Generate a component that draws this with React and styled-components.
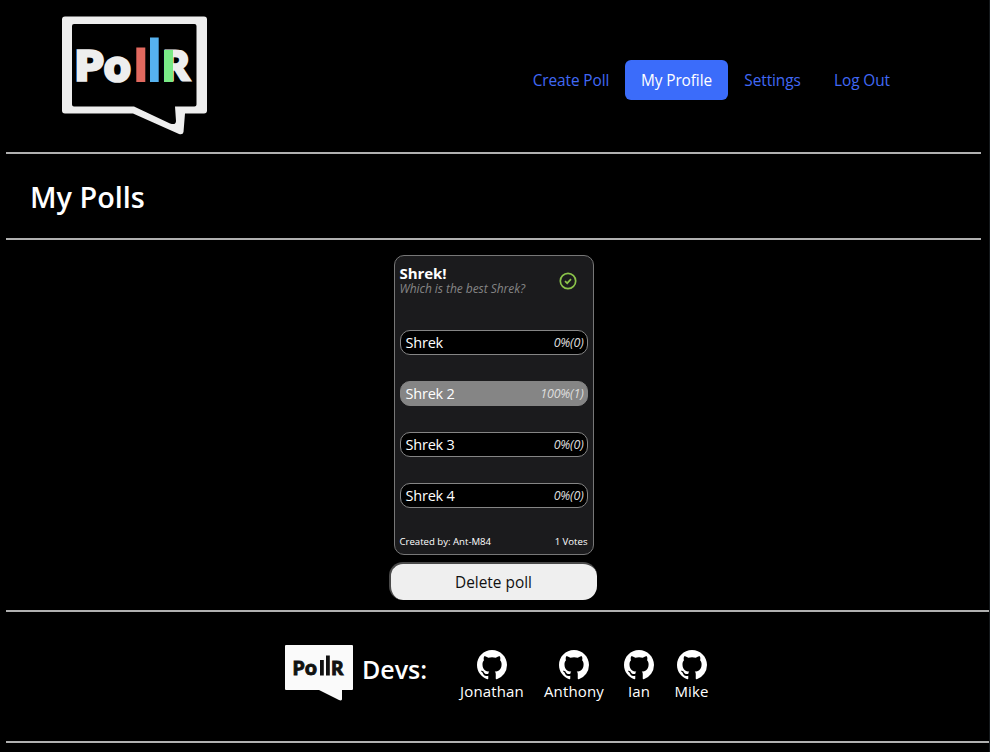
import React from "react";
import styled, { createGlobalStyle } from "styled-components";

const Global = createGlobalStyle`
  * { box-sizing: border-box; }
  html, body { margin: 0; background: #000; overflow: hidden; }
  body { font-family: "Open Sans", "Noto Sans", sans-serif; color: #fff; font-size: 16px; }
`;

const Page = styled.div`
  width: 990px;
  height: 752px;
  overflow: hidden;
  padding-left: 6px;
  background: #000;
  border-right: 1px solid #15191c;
`;
const Label = styled.span`
  display: block;
  margin: 0;
  white-space: nowrap;
  font-size: ${(p) => p.$size || 15.4}px;
  font-weight: ${(p) => p.$weight || 400};
  font-style: ${(p) => (p.$italic ? "italic" : "normal")};
  letter-spacing: ${(p) => p.$spacing || 0}px;
  color: ${(p) => p.$color || "inherit"};
  line-height: 1;
`;
const Header = styled.header`
  width: 975px;
  height: 154px;
  display: flex;
  justify-content: space-between;
  padding: 16px 74px 0 55px;
  border-bottom: 2px solid #b0b0b0;
`;
const Nav = styled.nav`
  display: flex;
  height: 40px;
  margin-top: 44px;
`;
const NavLink = styled.a`
  display: flex;
  align-items: center;
  justify-content: center;
  width: ${(p) => p.$width}px;
  padding-top: 2px;
  border-radius: 6px;
  color: ${(p) => (p.$active ? "#fff" : "#4169f5")};
  background: ${(p) => (p.$active ? "#3b6cfa" : "transparent")};
`;
const TitleBar = styled.section`
  width: 975px;
  height: 86px;
  display: flex;
  align-items: center;
  padding: 3px 0 0 24px;
  border-bottom: 2px solid #b0b0b0;
`;
const Content = styled.main`
  height: 370px;
  width: 975px;
  display: flex;
  flex-direction: column;
  align-items: center;
  padding-top: 15px;
`;
const Card = styled.article`
  width: 200px;
  height: 300px;
  border: 1px solid #777;
  border-radius: 10px;
  background: #1b1b1d;
  padding: 0 5px;
`;
const CardHead = styled.div`
  display: flex;
  justify-content: space-between;
  height: 74px;
  padding: 10px 11px 0 0;
`;
const Titles = styled.div`
  display: flex;
  flex-direction: column;
  gap: 2px;
`;
const StatusIcon = styled.svg`
  margin-top: 6px;
`;
const Options = styled.div`
  display: flex;
  flex-direction: column;
  gap: 26px;
`;
const Option = styled.div`
  height: 25px;
  display: flex;
  align-items: center;
  justify-content: space-between;
  padding: 2px 3px 0 5px;
  border: 1px solid #858585;
  border-radius: 10px;
  background: ${(p) => (p.$leading ? "#858585" : "#000")};
`;
const CardFoot = styled.div`
  display: flex;
  justify-content: space-between;
  margin-top: 29px;
`;
const DeleteButton = styled.button`
  width: 208px;
  height: 38px;
  margin: 7px 2px 0 0;
  padding: 2px 0 0;
  display: flex;
  align-items: center;
  justify-content: center;
  border: 0;
  border-top: 2px solid #4a4a4a;
  border-left: 2px solid #4a4a4a;
  border-radius: 14px;
  background: #efefef;
  color: #111;
  font-family: inherit;
`;
const Footer = styled.footer`
  height: 133px;
  border-top: 2px solid #b0b0b0;
  border-bottom: 2px solid #b0b0b0;
  display: flex;
  padding: 33px 0 0 279px;
`;
const DevsTitle = styled.div`
  width: 107px;
  padding: 12px 0 0 9px;
`;
const Devs = styled.div`
  display: flex;
  gap: 20px;
  margin-top: 5px;
`;
const Dev = styled.a`
  display: flex;
  flex-direction: column;
  align-items: center;
  width: ${(p) => p.$width}px;
  gap: 4px;
`;
const Letter = styled.text`
  font-family: Lato, sans-serif;
  font-weight: 900;
  font-size: ${(p) => p.$size}px;
  stroke: currentColor;
  stroke-width: ${(p) => p.$stroke}px;
`;
const LogoSvg = styled.svg`
  color: ${(p) => p.$color};
  fill: currentColor;
`;

function Logo() {
  return (
    <LogoSvg $color="#eee" width="147" height="120" viewBox="61 16 147 120">
      <path
        fillRule="evenodd"
        d="M65 16.5H204a3 3 0 0 1 3 3V110.500a3 3 0 0 1-3 3H185L183.500 132Q183 135 179 134L133 113.500H65a3 3 0 0 1-3-3V19.500a3 3 0 0 1 3-3ZM74 24a2 2 0 0 0-2 2V104.500a2 2 0 0 0 2 2H134L170 123.500Q176 125.500 176 121L175 106.500H194.500a2 2 0 0 0 2-2V26a2 2 0 0 0-2-2Z"
      />
      <Letter x="75.300" y="80.300" $size={40} $stroke={3.6} textLength="27.500" lengthAdjust="spacingAndGlyphs">P</Letter>
      <Letter x="104.500" y="81" $size={44.5} $stroke={3.6}>o</Letter>
      <rect x="136.300" y="47.500" width="9" height="34.500" fill="#e2695f" />
      <rect x="150" y="37.500" width="8.700" height="44.500" fill="#56b2ef" />
      <Letter x="163" y="80.300" $size={40} $stroke={3.2}>R</Letter>
      <rect x="164" y="50" width="9" height="32" fill="#7aea86" />
    </LogoSvg>
  );
}

function SmallLogo() {
  return (
    <LogoSvg $color="#111" width="68" height="56" viewBox="285 645 68 56">
      <path fill="#fafafa" d="M286 645H352a1 1 0 0 1 1 1V689a1 1 0 0 1-1 1H342V699.500Q341 701 339 700L319 690H286a1 1 0 0 1-1-1V646a1 1 0 0 1 1-1Z" />
      <Letter x="292.800" y="674.800" $size={18.5} $stroke={1}>P</Letter>
      <Letter x="305" y="675" $size={20.5} $stroke={1}>o</Letter>
      <rect x="320" y="660" width="3.800" height="15.500" />
      <rect x="326" y="655.500" width="3.800" height="20" />
      <Letter x="331.300" y="674.800" $size={18.5} $stroke={1}>R</Letter>
    </LogoSvg>
  );
}

function GithubIcon() {
  return (
    <svg width="30" height="30" viewBox="0 0 16 16" fill="#fff">
      <path d="M8 0C3.58 0 0 3.58 0 8c0 3.54 2.29 6.53 5.47 7.59.4.07.55-.17.55-.38 0-.19-.01-.82-.01-1.49-2.01.37-2.53-.49-2.69-.94-.09-.23-.48-.94-.82-1.13-.28-.15-.68-.52-.01-.53.63-.01 1.08.58 1.23.82.72 1.21 1.87.87 2.33.66.07-.52.28-.87.51-1.07-1.78-.2-3.64-.89-3.64-3.95 0-.87.31-1.59.82-2.15-.08-.2-.36-1.02.08-2.12 0 0 .67-.21 2.2.82.64-.18 1.32-.27 2-.27s1.36.09 2 .27c1.53-1.04 2.2-.82 2.2-.82.44 1.1.16 1.92.08 2.12.51.56.82 1.27.82 2.15 0 3.07-1.87 3.75-3.65 3.95.29.25.54.73.54 1.48 0 1.07-.01 1.93-.01 2.2 0 .21.15.46.55.38A8.01 8.01 0 0 0 16 8c0-4.42-3.58-8-8-8" />
    </svg>
  );
}

const links = [
  { text: "Create Poll", width: 108 },
  { text: "My Profile", width: 103, active: true },
  { text: "Settings", width: 89 },
  { text: "Log Out", width: 90 },
];
const options = [
  { name: "Shrek", result: "0%(0)" },
  { name: "Shrek 2", result: "100%(1)", leading: true },
  { name: "Shrek 3", result: "0%(0)" },
  { name: "Shrek 4", result: "0%(0)" },
];
const devs = [
  { name: "Jonathan", width: 64 },
  { name: "Anthony", width: 60 },
  { name: "Ian", width: 30 },
  { name: "Mike", width: 35 },
];

export default function App() {
  return (
    <Page>
      <Global />
      <Header>
        <Logo />
        <Nav>
          {links.map((l) => (
            <NavLink key={l.text} $width={l.width} $active={l.active}>
              <Label $spacing={-0.1}>{l.text}</Label>
            </NavLink>
          ))}
        </Nav>
      </Header>
      <TitleBar>
        <Label as="h1" $size={28.8} $weight={600}>My Polls</Label>
      </TitleBar>
      <Content>
        <Card>
          <CardHead>
            <Titles>
              <Label $size={15} $weight={700} $spacing={-0.05}>Shrek!</Label>
              <Label $size={12} $italic $color="#858585" $spacing={-0.05}>Which is the best Shrek?</Label>
            </Titles>
            <StatusIcon width="18" height="18" viewBox="0 0 18 18" fill="none" stroke="#8bc34a" strokeWidth="1.7">
              <circle cx="9" cy="9" r="7.700" />
              <path d="M6 9.200L8.200 11.200L12 7.200" />
            </StatusIcon>
          </CardHead>
          <Options>
            {options.map((o) => (
              <Option key={o.name} $leading={o.leading}>
                <Label $size={14.5} $spacing={-0.2}>{o.name}</Label>
                <Label $size={12.5} $italic $color="#ddd" $spacing={-0.2}>{o.result}</Label>
              </Option>
            ))}
          </Options>
          <CardFoot>
            <Label $size={9.6}>Created by: Ant-M84</Label>
            <Label $size={9.6}>1 Votes</Label>
          </CardFoot>
        </Card>
        <DeleteButton>
          <Label>Delete poll</Label>
        </DeleteButton>
      </Content>
      <Footer>
        <SmallLogo />
        <DevsTitle>
          <Label $size={25} $weight={600}>Devs:</Label>
        </DevsTitle>
        <Devs>
          {devs.map((d) => (
            <Dev key={d.name} $width={d.width}>
              <GithubIcon />
              <Label $size={15} $spacing={0.15}>{d.name}</Label>
            </Dev>
          ))}
        </Devs>
      </Footer>
    </Page>
  );
}
